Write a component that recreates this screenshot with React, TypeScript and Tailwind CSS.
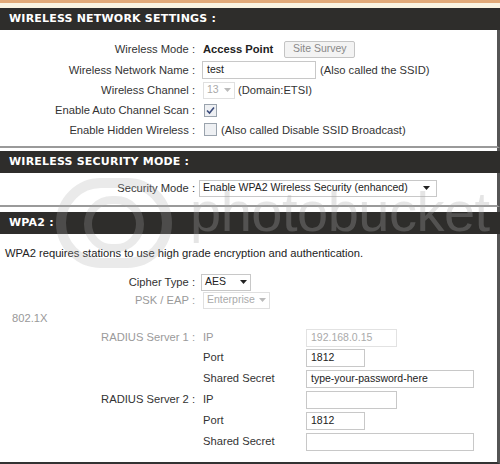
import React from 'react';

const font = { fontFamily: '"Liberation Sans", Arial, sans-serif' };
const headFont = { fontFamily: '"DejaVu Sans", Verdana, sans-serif' };

const Header = ({ title }: { title: string }) => (
  <div className="h-[22px] bg-[#2e2d2b] flex items-center pl-[9px] text-white font-bold text-[11px] tracking-[0.2px]" style={headFont}>
    {title}
  </div>
);

const Row = ({ label, gray, children, h = 'h-[20px]' }: { label: string; gray?: boolean; children?: React.ReactNode; h?: string }) => (
  <div className={`flex items-center ${h}`}>
    <div className={`w-[195px] text-right shrink-0 whitespace-nowrap ${gray ? 'text-[#9a9a9a]' : 'text-[#333]'}`}>{label}</div>
    <div className="flex items-center">{children}</div>
  </div>
);

const Input = ({ w, value, disabled }: { w: string; value?: string; disabled?: boolean }) => (
  <div className={`${w} h-[18px] border bg-white flex items-center px-[4px] text-[10.5px] ${disabled ? 'text-[#aaa] border-[#e2e2e2]' : 'text-[#222] border-[#c8c8c8]'}`}>
    {value}
  </div>
);

const Select = ({ w, value, disabled, arrowMr = 'mr-[3px]' }: { w: string; value: string; disabled?: boolean; arrowMr?: string }) => (
  <div className={`${w} h-[17px] border ${disabled ? 'border-[#e0e0e0] text-[#aaa]' : 'border-[#c8c8c8] text-[#222]'} bg-white flex items-center justify-between pl-[3px] text-[10.5px] whitespace-nowrap`}>
    <span>{value}</span>
    <svg width="7" height="4" viewBox="0 0 7 4" className={arrowMr}>
      <path d="M0 0h7L3.5 4z" fill={disabled ? '#bbb' : '#222'} />
    </svg>
  </div>
);

const Check = ({ checked }: { checked?: boolean }) => (
  <div className="w-[13px] h-[13px] border border-[#9aa3ad] bg-[#eef0f3] flex items-center justify-center">
    {checked && (
      <svg width="9" height="9" viewBox="0 0 9 9">
        <path d="M1 4.5l2.5 2.5L8 1.5" stroke="#3a4a7a" strokeWidth="1.6" fill="none" />
      </svg>
    )}
  </div>
);

export default function App() {
  return (
    <div className="relative w-[500px] h-[464px] bg-white overflow-hidden text-[11.2px]" style={font}>
      <div className="h-[3px] bg-[#e2aa78]" />
      <div className="h-[5px] bg-[#fbf5e2]" />

      <Header title="WIRELESS NETWORK SETTINGS :" />
      <div className="border-r-[3px] border-[#555] border-b-[2px] border-b-[#9a9a9a] pt-[8px] pb-[6px]">
        <Row label="Wireless Mode :" h="h-[22px]">
          <span className="ml-[8px] font-bold text-[#222]">Access Point</span>
          <div className="ml-[11px] w-[71px] h-[17px] border border-[#c4c4c4] bg-[#f3f3f3] rounded-[2px] flex items-center justify-center text-[10.5px] text-[#888]">Site Survey</div>
        </Row>
        <Row label="Wireless Network Name :">
          <div className="ml-[7px]"><Input w="w-[114px]" value="test" /></div>
          <span className="ml-[4px] text-[#333]">(Also called the SSID)</span>
        </Row>
        <Row label="Wireless Channel :">
          <div className="ml-[8px]"><Select w="w-[32px]" value="13" disabled /></div>
          <span className="ml-[3px] text-[#333]">(Domain:ETSI)</span>
        </Row>
        <Row label="Enable Auto Channel Scan :">
          <div className="ml-[9px]"><Check checked /></div>
        </Row>
        <Row label="Enable Hidden Wireless :">
          <div className="ml-[9px]"><Check /></div>
          <span className="ml-[4px] text-[#333]">(Also called Disable SSID Broadcast)</span>
        </Row>
      </div>
      <div className="h-[3px] border-r-[3px] border-[#555]" />

      <Header title="WIRELESS SECURITY MODE :" />
      <div className="border-r-[3px] border-[#555] border-b-[2px] border-b-[#9a9a9a] pt-[5px] pb-[7px]">
        <Row label="Security Mode :">
          <div className="ml-[4px]"><Select w="w-[238px]" value="Enable WPA2 Wireless Security (enhanced)" arrowMr="mr-[6px]" /></div>
        </Row>
      </div>
      <div className="h-[5px] border-r-[3px] border-[#555]" />

      <Header title="WPA2 :" />
      <div className="border-r-[3px] border-[#555] border-b-[2px] border-b-[#333] h-[230px] pt-[9px]">
        <div className="pl-[5px] h-[20px] flex items-center text-[#222]">WPA2 requires stations to use high grade encryption and authentication.</div>
        <div className="h-[10px]" />
        <Row label="Cipher Type :" h="h-[18px]">
          <div className="ml-[6px]"><Select w="w-[50px]" value="AES" /></div>
        </Row>
        <Row label="PSK / EAP :" gray h="h-[18px]">
          <div className="ml-[8px]"><Select w="w-[67px]" value="Enterprise" disabled /></div>
        </Row>
        <div className="h-[19px] flex items-center pl-[12px] text-[#999]">802.1X</div>
        <Row label="RADIUS Server 1 :" gray h="h-[19px]">
          <span className="ml-[8px] w-[103px] text-[#999]">IP</span>
          <Input w="w-[91px]" value="192.168.0.15" disabled />
        </Row>
        <Row label="" h="h-[21px]">
          <span className="ml-[8px] w-[103px] text-[#333]">Port</span>
          <Input w="w-[59px]" value="1812" />
        </Row>
        <Row label="" h="h-[21px]">
          <span className="ml-[8px] w-[103px] text-[#333]">Shared Secret</span>
          <Input w="w-[168px]" value="type-your-password-here" />
        </Row>
        <Row label="RADIUS Server 2 :" h="h-[21px]">
          <span className="ml-[8px] w-[103px] text-[#333]">IP</span>
          <Input w="w-[91px]" />
        </Row>
        <Row label="" h="h-[21px]">
          <span className="ml-[8px] w-[103px] text-[#333]">Port</span>
          <Input w="w-[59px]" value="1812" />
        </Row>
        <Row label="" h="h-[21px]">
          <span className="ml-[8px] w-[103px] text-[#333]">Shared Secret</span>
          <Input w="w-[168px]" />
        </Row>
      </div>

      {/* photobucket watermark */}
      <div className="absolute left-[56px] top-[178px] w-[116px] h-[90px] rounded-full border-[10px] border-[#aaaaaa]/25 pointer-events-none" />
      <div className="absolute left-[84px] top-[196px] w-[60px] h-[56px] rounded-full border-[8px] border-[#aaaaaa]/25 pointer-events-none" />
      <div className="absolute left-[190px] top-[184px] text-[56px] leading-none text-[#aaaaaa]/30 pointer-events-none tracking-[-0.5px]" style={{ fontFamily: '"Liberation Sans", Arial, sans-serif' }}>photobucket</div>
    </div>
  );
}
